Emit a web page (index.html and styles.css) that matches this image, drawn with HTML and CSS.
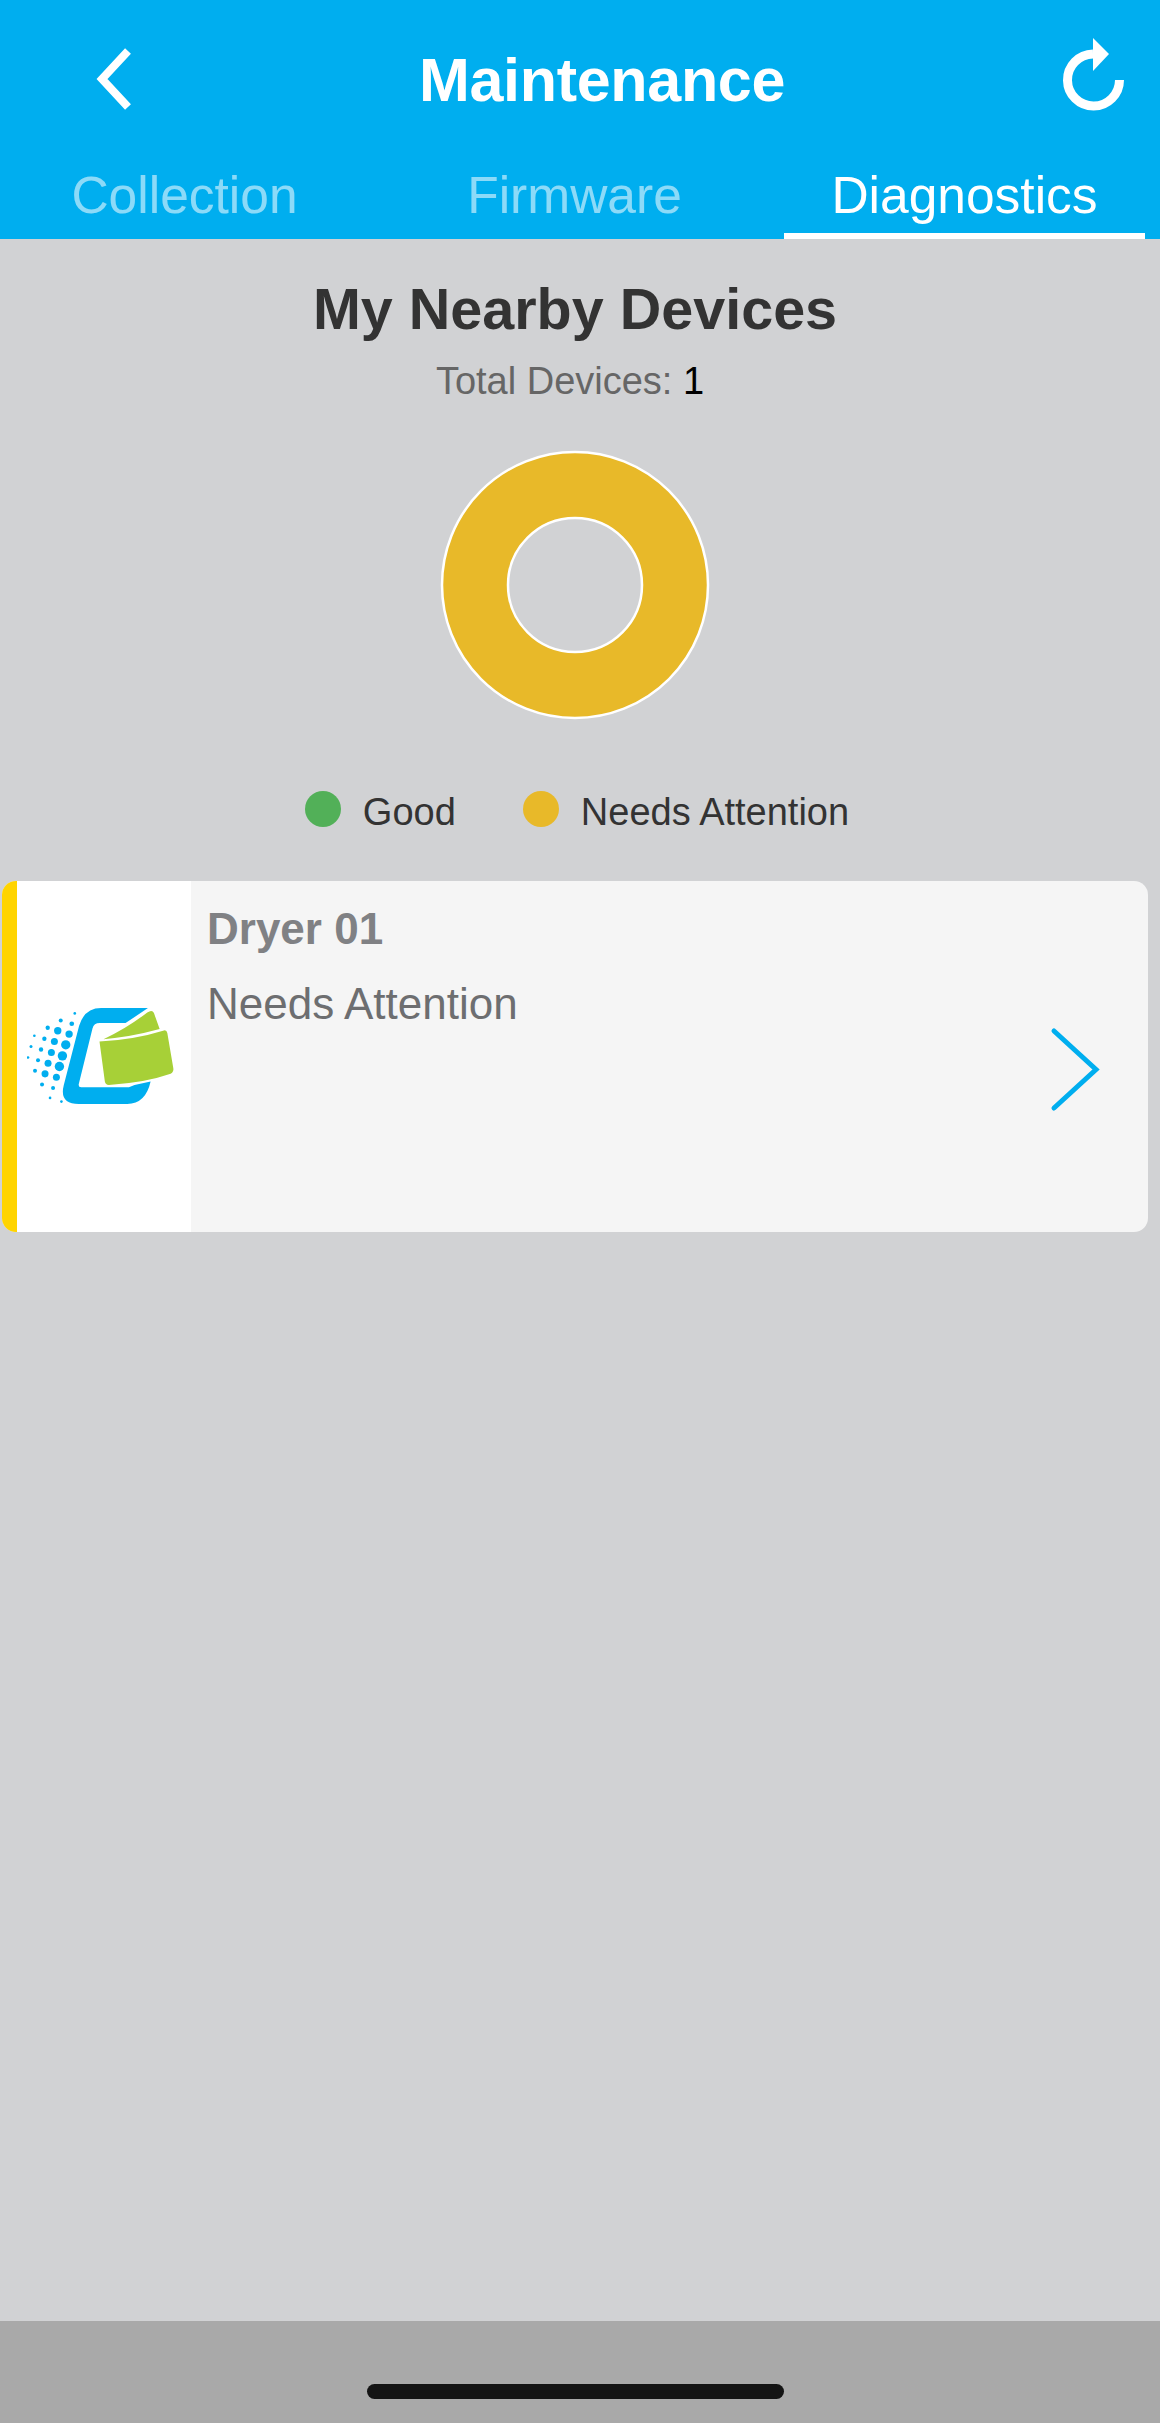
FILE: index.html
```html
<!DOCTYPE html>
<html lang="en">
<head>
<meta charset="utf-8">
<title>Maintenance</title>
<link rel="stylesheet" href="styles.css">
</head>
<body>
<div class="screen">
  <header class="header">
    <div class="titlebar">
      <svg class="back" viewBox="0 0 42 70" aria-hidden="true"><path d="M34 7 L8 35 L34 63" /></svg>
      <h1 class="title">Maintenance</h1>
      <svg class="refresh" viewBox="0 0 70 76" aria-hidden="true">
        <path class="refresh-arc" d="M61.500 43 A26 26 0 1 1 35 17" />
        <path class="refresh-head" d="M35 1 L51 17 L35 34 Z" />
      </svg>
    </div>
    <nav class="tabs">
      <div class="tab">Collection</div>
      <div class="tab">Firmware</div>
      <div class="tab active">Diagnostics</div>
    </nav>
  </header>

  <main class="content">
    <section class="summary">
      <h2 class="heading">My Nearby Devices</h2>
      <p class="total">Total Devices: <span class="total-num">1</span></p>
      <svg class="donut" viewBox="0 0 272 272" aria-hidden="true">
        <path class="donut-ring" fill-rule="evenodd" d="M136 3 A133 133 0 1 1 136 269 A133 133 0 1 1 136 3 Z M136 69 A67 67 0 1 0 136 203 A67 67 0 1 0 136 69 Z" />
      </svg>
      <div class="legend">
        <div class="legend-item"><span class="dot dot-good"></span>Good</div>
        <div class="legend-item"><span class="dot dot-warn"></span>Needs Attention</div>
      </div>
    </section>

    <article class="card">
      <div class="card-stripe"></div>
      <div class="card-media">
        <svg class="logo" viewBox="50 85 440 290" aria-hidden="true">
          <path class="logo-blue" d="M412 85 L272 85 Q222 85 206 138 L160 316 Q146 372 205 372 L350 372 Q405 372 420 305 L372 315 L355 322 L212 322 Q203 322 205 312 L246 146 Q250 130 268 130 L345 130 Z" />
          <path class="logo-green" d="M279 178 Q350 145 410 98 Q425 88 430 100 L447 148 Q360 172 279 178 Z" />
          <path class="logo-green" d="M267 185 Q370 180 460 152 Q468 150 470 160 L488 265 Q490 275 480 282 Q400 310 295 315 Q285 315 283 305 Z" />
          <g class="logo-dots">
            <circle cx="193" cy="101" r="4"/><circle cx="151" cy="122" r="6"/><circle cx="184" cy="132" r="7"/>
            <circle cx="112" cy="144" r="6.500"/><circle cx="142" cy="153" r="11"/><circle cx="176" cy="163" r="11"/>
            <circle cx="72" cy="168" r="4"/><circle cx="102" cy="177" r="6.500"/><circle cx="132" cy="185" r="10.500"/>
            <circle cx="166" cy="195" r="14"/><circle cx="62" cy="200" r="4.500"/><circle cx="92" cy="209" r="6.500"/>
            <circle cx="123" cy="218" r="10.500"/><circle cx="156" cy="228" r="14"/><circle cx="53" cy="233" r="4"/>
            <circle cx="83" cy="241" r="6"/><circle cx="113" cy="250" r="10.500"/><circle cx="147" cy="260" r="14"/>
            <circle cx="74" cy="273" r="6"/><circle cx="104" cy="282" r="10.500"/><circle cx="138" cy="292" r="10.500"/>
            <circle cx="95" cy="314" r="6"/><circle cx="128" cy="324" r="6"/><circle cx="119" cy="354" r="4"/>
            <circle cx="153" cy="365" r="4"/>
          </g>
        </svg>
      </div>
      <div class="card-body">
        <div class="card-name">Dryer 01</div>
        <div class="card-status">Needs Attention</div>
      </div>
      <svg class="card-chevron" viewBox="0 0 52 85" aria-hidden="true"><path d="M4 4 L46 42.500 L4 81" /></svg>
    </article>
  </main>

  <footer class="homebar"><span class="home-indicator"></span></footer>
</div>
</body>
</html>
```

FILE: styles.css
```css
* { box-sizing: border-box; }

html, body {
  margin: 0;
  padding: 0;
}

body {
  font-family: "Liberation Sans", Arial, sans-serif;
  background: #d1d2d4;
}

.screen {
  width: 1160px;
  height: 2423px;
  display: flex;
  flex-direction: column;
  background: #d1d2d4;
}

.header {
  height: 239px;
  background: #00aeef;
  color: #fff;
  display: flex;
  flex-direction: column;
  flex: none;
}

.titlebar {
  height: 150px;
  padding: 37px 32px 0 94px;
  display: flex;
  justify-content: space-between;
  align-items: flex-start;
}

.back {
  width: 42px;
  height: 70px;
  margin-top: 7px;
  flex: none;
}

.back path {
  fill: none;
  stroke: #fff;
  stroke-width: 8;
  stroke-linejoin: miter;
}

.title {
  margin: 11px 0 0 10px;
  font-size: 61px;
  line-height: 64px;
  font-weight: 700;
  letter-spacing: -0.3px;
}

.refresh {
  width: 70px;
  height: 76px;
  flex: none;
}

.refresh-arc {
  fill: none;
  stroke: #fff;
  stroke-width: 9;
}

.refresh-head {
  fill: #fff;
}

.tabs {
  flex: 1;
  display: grid;
  grid-template-columns: repeat(3, 1fr);
  gap: 29px;
  padding: 0 15px 0 4px;
}

.tab {
  text-align: center;
  font-size: 51.500px;
  line-height: 56px;
  padding-top: 17px;
  color: rgba(255, 255, 255, 0.55);
}

.tab.active {
  color: #fff;
  border-bottom: 6px solid #fff;
}

.content {
  flex: 1;
  padding: 40px 12px 0 2px;
}

.summary {
  display: flex;
  flex-direction: column;
  align-items: center;
}

.heading {
  margin: 0;
  font-size: 57.500px;
  line-height: 60px;
  font-weight: 700;
  color: #333;
}

.total {
  margin: 22px 10px 0 0;
  font-size: 38px;
  line-height: 40px;
  color: #666;
}

.total-num {
  color: #000;
}

.donut {
  display: block;
  width: 272px;
  height: 272px;
  margin-top: 48px;
}

.donut-ring {
  fill: #e8b929;
  stroke: #fff;
  stroke-width: 2.500;
}

.legend {
  display: flex;
  gap: 67px;
  margin-top: 71px;
  margin-left: 4px;
}

.legend-item {
  display: flex;
  align-items: center;
  gap: 22px;
  font-size: 38px;
  line-height: 40px;
  color: #333;
}

.dot {
  width: 36px;
  height: 36px;
  border-radius: 50%;
  flex: none;
  margin-top: -6px;
}

.dot-good { background: #52b058; }
.dot-warn { background: #e8b929; }

.card {
  display: flex;
  align-items: stretch;
  height: 351px;
  margin-top: 49px;
  border-radius: 14px;
  overflow: hidden;
  background: #f5f5f5;
}

.card-stripe {
  width: 15px;
  background: #ffd400;
  flex: none;
}

.card-media {
  width: 174px;
  background: #fff;
  display: flex;
  align-items: center;
  padding-left: 10px;
  flex: none;
}

.logo {
  width: 147px;
  height: 97px;
  display: block;
}

.logo-blue { fill: #00aeef; }
.logo-green { fill: #a7d037; }
.logo-dots { fill: #00aeef; }

.card-body {
  flex: 1;
  padding: 23px 0 0 16px;
}

.card-name {
  font-size: 44px;
  line-height: 50px;
  font-weight: 700;
  color: #808184;
}

.card-status {
  margin-top: 25px;
  font-size: 44px;
  line-height: 50px;
  color: #6d6e70;
}

.card-chevron {
  width: 52px;
  height: 85px;
  margin: 146px 46px 0 0;
  flex: none;
}

.card-chevron path {
  fill: none;
  stroke: #00aeef;
  stroke-width: 5;
  stroke-linecap: round;
}

.homebar {
  height: 102px;
  background: #a9a9a9;
  flex: none;
  display: flex;
  justify-content: center;
  padding: 63px 9px 0 0;
}

.home-indicator {
  width: 417px;
  height: 15px;
  border-radius: 8px;
  background: #141414;
}
```
